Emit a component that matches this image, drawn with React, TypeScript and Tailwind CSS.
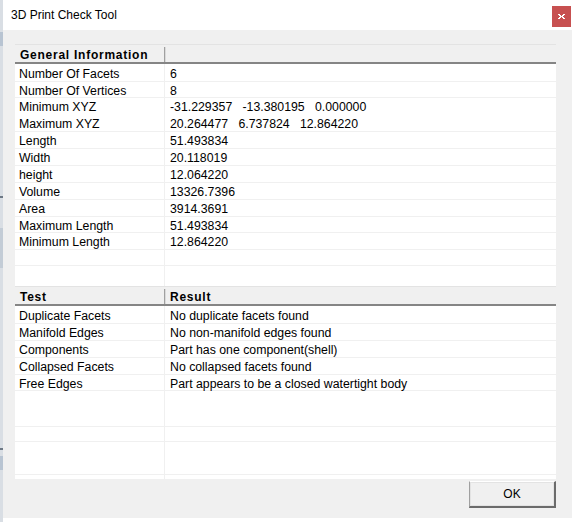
import React from "react";

type Row = { label: string; value: string; h: number };

const infoRows: Row[] = [
  { label: "Number Of Facets", value: "6", h: 18 },
  { label: "Number Of Vertices", value: "8", h: 16 },
  { label: "Minimum XYZ\nMaximum XYZ", value: "-31.229357   -13.380195   0.000000\n20.264477   6.737824   12.864220", h: 34 },
  { label: "Length", value: "51.493834", h: 17 },
  { label: "Width", value: "20.118019", h: 17 },
  { label: "height", value: "12.064220", h: 17 },
  { label: "Volume", value: "13326.7396", h: 17 },
  { label: "Area", value: "3914.3691", h: 17 },
  { label: "Maximum Length", value: "51.493834", h: 16 },
  { label: "Minimum Length", value: "12.864220", h: 17 },
  { label: "", value: "", h: 16 },
];

const testRows: Row[] = [
  { label: "Duplicate Facets", value: "No duplicate facets found", h: 18 },
  { label: "Manifold Edges", value: "No non-manifold edges found", h: 17 },
  { label: "Components", value: "Part has one component(shell)", h: 17 },
  { label: "Collapsed Facets", value: "No collapsed facets found", h: 17 },
  { label: "Free Edges", value: "Part appears to be a closed watertight body", h: 16 },
  { label: "", value: "", h: 36 },
  { label: "", value: "", h: 15 },
  { label: "", value: "", h: 33 },
];

function ListView({ head1, head2, rows, height }: { head1: string; head2: string; rows: Row[]; height: number }) {
  return (
    <div className="flex w-[541px] flex-col bg-white" style={{ height }}>
      <div className="flex h-[20px] shrink-0 border-t border-[#e3e3e3] border-b-2 border-b-[#858585] bg-[#f0f0f0] pt-[2px] font-bold text-[12px] tracking-[0.75px]">
        <div className="flex w-[150px] items-center border-r border-[#a0a0a0] pl-[5px]">{head1}</div>
        <div className="flex flex-1 items-center border-l border-[#dadada] pl-[4px]">{head2}</div>
      </div>
      {rows.map((r, i) => (
        <div key={i} className="flex shrink-0 border-b border-[#f0f0f0] text-[12.3px]" style={{ height: r.h }}>
          <div className="flex w-[150px] items-center whitespace-pre border-r border-[#f0f0f0] pl-[4px] pt-[3px] leading-[17px]">{r.label}</div>
          <div className="flex flex-1 items-center whitespace-pre pl-[5px] pt-[3px] leading-[17px]">{r.value}</div>
        </div>
      ))}
      <div className="flex flex-1">
        <div className="w-[150px] border-r border-[#f0f0f0]" />
        <div className="flex-1" />
      </div>
    </div>
  );
}

export default function App() {
  return (
    <div className="flex h-[522px] w-[576px] overflow-hidden bg-white text-[12px] text-black" style={{ fontFamily: '"Liberation Sans", Arial, sans-serif' }}>
      {/* edge of the window behind */}
      <div className="flex h-[522px] w-[3px] flex-col bg-[#d9dee4]">
        <div className="mt-[32px] h-[14px] bg-[#b8c4d2]" />
        <div className="mt-[150px] h-[2px] bg-[#6d7885]" />
        <div className="mt-[30px] h-[40px] bg-[#c3ccd6]" />
        <div className="mt-[180px] h-[2px] bg-[#6d7885]" />
        <div className="mt-[6px] h-[14px] bg-[#b8c4d2]" />
      </div>

      <div className="flex h-[518px] w-[569px] flex-col">
        <div className="flex h-[30px] shrink-0 items-start justify-between bg-white">
          <span className="mt-[8px] pl-[8px] text-[12px] leading-[15px]">3D Print Check Tool</span>
          <div className="mr-[1px] mt-[6px] flex h-[21px] w-[19px] items-center justify-center bg-[#c75050]">
            <svg width="7" height="5" viewBox="0 0 7 5" shapeRendering="crispEdges">
              <path d="M0 0h2v1h1v1h1V1h1V0h2v1H6v1H5v1h1v1h1v1H5V4H4V3H3v1H2v1H0V4h1V3h1V2H1V1H0z" fill="#fff" />
            </svg>
          </div>
        </div>

        <div className="flex flex-1 flex-col bg-[#f0f0f0] pl-[12px] pt-[14px]">
          <ListView head1="General Information" head2="" rows={infoRows} height={242} />
          <ListView head1="Test" head2="Result" rows={testRows} height={193} />
          <div className="mt-[2px] flex w-[541px] justify-end">
            <button className="flex h-[27px] w-[87px] items-center justify-center border-l border-t border-l-[#a0a0a0] border-t-white border-r-2 border-b-2 border-r-[#6b6b6b] border-b-[#6b6b6b] bg-[#f0f0f0] text-[12px]">
              <span className="flex h-full w-full items-center justify-center border border-[#e3e3e3]">OK</span>
            </button>
          </div>
        </div>
      </div>
    </div>
  );
}
